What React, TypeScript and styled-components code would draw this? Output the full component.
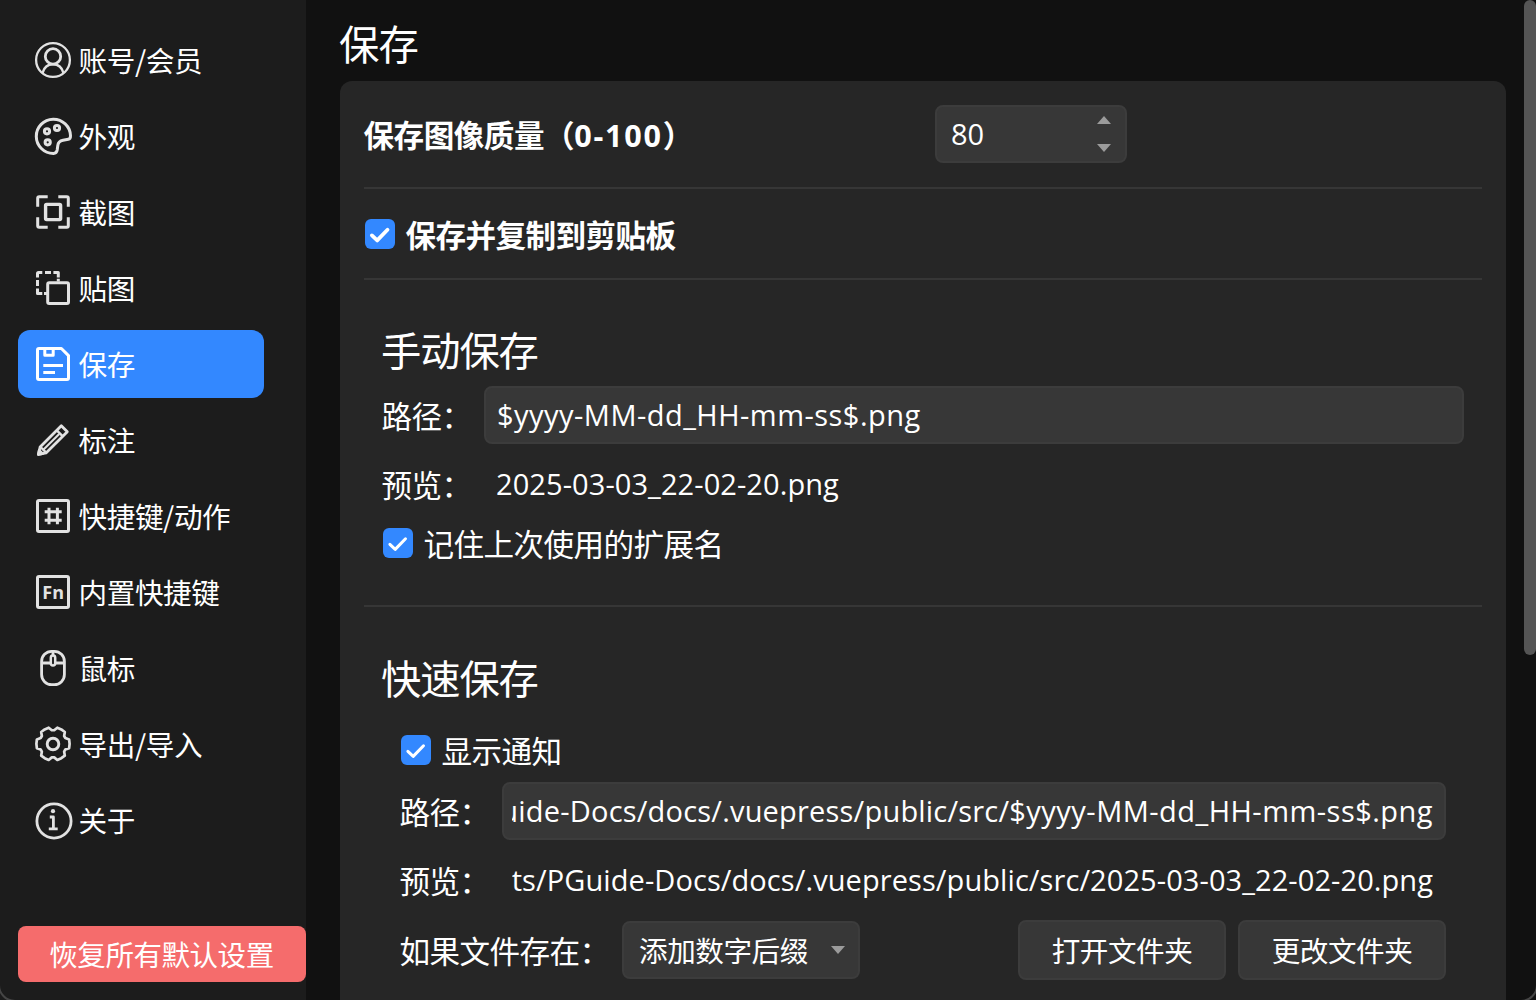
import React from 'react';
import styled, { createGlobalStyle, css } from 'styled-components';

const GlobalStyle = createGlobalStyle`
  *, *::before, *::after { box-sizing: border-box; }
  body {
    margin: 0;
    background: #1a1a1a;
    overflow: hidden;
  }
`;

const Window = styled.div`
  position: relative;
  display: flex;
  width: 1536px;
  height: 1000px;
  overflow: hidden;
  background: #111111;
  color: #ffffff;
  font-family: 'Open Sans', 'Noto Sans CJK SC', sans-serif;
  font-size: 30px;

  /* window outline, visible only where the bottom corners curve */
  &::after {
    content: '';
    position: absolute;
    inset: -20px -2px -2px;
    border: 2px solid #454545;
    border-radius: 0 0 17px 17px;
    pointer-events: none;
  }
`;

const Sidebar = styled.aside`
  display: flex;
  flex-direction: column;
  justify-content: space-between;
  width: 306px;
  flex: none;
  padding: 26px 0 18px 18px;
  background: #1c1c1c;
`;

const Nav = styled.nav`
  display: flex;
  flex-direction: column;
  gap: 8px;
`;

const NavItem = styled.a<{ $active?: boolean }>`
  display: flex;
  align-items: center;
  gap: 6.5px;
  width: 246px;
  height: 68px;
  padding-left: 17px;
  border-radius: 12px;
  background: ${(p) => (p.$active ? '#3388ff' : 'transparent')};
  color: ${(p) => (p.$active ? '#ffffff' : '#e2e2e2')};
`;

const NavLabel = styled.span`
  color: #ffffff;
  font-family: 'Noto Sans CJK SC', sans-serif;
  font-weight: 400;
  font-size: 28.6px;
  letter-spacing: -0.4px;
  line-height: 36px;
  white-space: nowrap;
`;

const NavIcon = styled.svg`
  width: 37px;
  height: 37px;
  flex: none;
  overflow: visible;
  fill: none;
  stroke: currentColor;
  stroke-width: 3;
  stroke-linejoin: round;
`;

const ResetButton = styled.button`
  height: 56px;
  border: 0;
  padding: 0 1px 0 0;
  border-radius: 8px;
  background: #f56c6c;
  color: #ffffff;
  font: 400 28.5px/36px 'Noto Sans CJK SC', sans-serif;
  letter-spacing: -0.45px;
`;

const Main = styled.main`
  display: flex;
  flex-direction: column;
  width: 1218px;
  padding: 0 18px 0 34px;
`;

const PageTitle = styled.h1`
  margin: 0 0 0 -1px;
  height: 81px;
  padding-top: 13px;
  font: 400 40.4px/60px 'Noto Sans CJK SC', sans-serif;
  letter-spacing: -1px;
`;

const Card = styled.section`
  display: flex;
  flex-direction: column;
  flex: 1;
  padding: 24px 24px 0;
  border-radius: 12px 12px 0 0;
  background: #262626;
`;

const Divider = styled.hr`
  width: 1118px;
  height: 2px;
  margin: 0;
  border: 0;
  flex: none;
  background: #363636;
`;

const QualityRow = styled.div`
  display: grid;
  grid-template-columns: 571px 192px;
  height: 82px;
  align-items: start;
`;

const StrongLabel = styled.span`
  margin-left: -0.5px;
  font-family: 'Noto Sans CJK SC', sans-serif;
  font-weight: 700;
  font-size: 30.6px;
  letter-spacing: -0.5px;
  line-height: 59px;
  white-space: nowrap;
`;

const QualityRange = styled.span`
  font-family: 'Open Sans', sans-serif;
  font-size: 30.5px;
  letter-spacing: 1.8px;
`;

const fieldSurface = css`
  border: 2px solid #3c3c3c;
  border-radius: 8px;
  background: #373737;
  color: #ffffff;
`;

const Spinner = styled.div`
  ${fieldSurface}
  display: flex;
  justify-content: space-between;
  align-items: center;
  height: 58px;
  padding: 0 14px;
  line-height: 54px;
  font-size: 29px;
`;

const Arrows = styled.span`
  display: flex;
  flex-direction: column;
  gap: 20px;
`;

const Arrow = styled.i<{ $up?: boolean }>`
  display: block;
  width: 14px;
  height: 8px;
  background: #9b9b9b;
  clip-path: ${(p) => (p.$up ? 'polygon(0 100%, 50% 0, 100% 100%)' : 'polygon(0 0, 100% 0, 50% 100%)')};
`;

const CheckRow = styled.label<{ $top: number; $height: number; $strong?: boolean }>`
  display: flex;
  align-items: flex-start;
  gap: 10.5px;
  height: ${(p) => p.$height}px;
  padding: ${(p) => p.$top}px 0 0 1px;
  font-family: 'Noto Sans CJK SC', sans-serif;
  font-weight: ${(p) => (p.$strong ? 700 : 400)};
  font-size: 30.6px;
  letter-spacing: -0.6px;
  line-height: 31px;
  white-space: nowrap;
`;

const CheckSquare = styled.span`
  display: grid;
  place-items: center;
  width: 30px;
  height: 30px;
  flex: none;
  border-radius: 6px;
  background: #3388ff;
`;

const Group = styled.div<{ $height?: number; $top: number }>`
  display: flex;
  flex-direction: column;
  padding: ${(p) => p.$top}px 18px 0;
  ${(p) => p.$height && `height: ${p.$height}px;`}
`;

const GroupTitle = styled.h2`
  margin: 0 0 0 -1px;
  height: 66px;
  font: 400 40.3px/57px 'Noto Sans CJK SC', sans-serif;
  letter-spacing: -1.1px;
`;

const Indented = styled.div`
  display: flex;
  flex-direction: column;
  padding: 0 18px;
`;

const FieldRow = styled.div`
  display: grid;
  grid-template-columns: 102px minmax(0, 1fr);
  grid-template-rows: 58px;
  height: 58px;
  margin-bottom: 12px;
`;

const FieldLabel = styled.span`
  margin-left: -0.5px;
  font: 400 30.6px/58px 'Noto Sans CJK SC', sans-serif;
  letter-spacing: -0.6px;
  white-space: nowrap;
`;

const PreviewLabel = styled(FieldLabel)`
  line-height: 56px;
`;

const TextField = styled.div<{ $spacing: number; $end?: boolean }>`
  ${fieldSurface}
  display: flex;
  padding: 0 ${(p) => (p.$end ? 11 : 12)}px 0 ${(p) => (p.$end ? 8 : 11)}px;
  line-height: 54px;
  font-size: 29px;
  letter-spacing: ${(p) => p.$spacing}px;
`;

const Pattern = styled.span`
  letter-spacing: 0.47px;
`;

const Preview = styled.div<{ $end?: boolean }>`
  display: flex;
  padding: 0 ${(p) => (p.$end ? 13 : 12)}px 0 ${(p) => (p.$end ? 10 : 12)}px;
  line-height: 56px;
  font-size: 29px;
  letter-spacing: 0.08px;
`;

const Clip = styled.span<{ $end?: boolean }>`
  display: flex;
  flex: 1;
  min-width: 0;
  overflow: hidden;
  white-space: nowrap;
  justify-content: ${(p) => (p.$end ? 'flex-end' : 'flex-start')};
`;

const ActionRow = styled.div`
  display: flex;
  align-items: center;
  height: 60px;
  margin-top: -2px;
`;

const ExistsLabel = styled(FieldLabel)`
  width: 222.5px;
`;

const Select = styled.div`
  ${fieldSurface}
  display: flex;
  align-items: center;
  justify-content: space-between;
  width: 238px;
  height: 58px;
  padding: 0 13px 0 15px;
  margin-right: auto;
  font: 400 28.6px/54px 'Noto Sans CJK SC', sans-serif;
  letter-spacing: -0.45px;
`;

const Button = styled.button`
  ${fieldSurface}
  width: 208px;
  height: 60px;
  margin-left: 12px;
  padding: 0;
  font: 400 28.6px/54px 'Noto Sans CJK SC', sans-serif;
  letter-spacing: -0.45px;
`;

const ScrollTrack = styled.div`
  width: 12px;
  flex: none;
`;

const ScrollThumb = styled.div`
  height: 655px;
  border-radius: 6px;
  background: #555555;
`;

const gearPath = (() => {
  const pts: string[] = [];
  for (let i = 0; i < 6; i++) {
    [[-25, 13.6], [-15, 16.7], [0, 16.6], [15, 16.7], [25, 13.6]].forEach(([a, r]) => {
      const t = ((i * 60 + a) * Math.PI) / 180;
      pts.push(`${(18 + r * Math.cos(t)).toFixed(2)} ${(17.8 + r * Math.sin(t)).toFixed(2)}`);
    });
  }
  return `M${pts.join('L')}Z`;
})();

const icons = {
  user: (
    <g strokeWidth="2.3">
      <circle cx="18" cy="18" r="16.9" />
      <circle cx="18" cy="14.4" r="7.7" strokeWidth="2.8" />
      <path d="M7.5 31C9 25.4 13 22.2 18 22.2S27 25.4 28.5 31" strokeWidth="2.6" />
    </g>
  ),
  palette: (
    <g>
      <path d="M18.4 35.4A17.1 17.1 0 1 1 35.5 17.8Q35.6 20.9 33.3 21.3L28 22.3Q23.3 23.2 22.8 27.5L22.2 32Q21.6 35.5 18.4 35.4Z" />
      <circle cx="12" cy="13.3" r="2.6" />
      <circle cx="22" cy="10" r="2.6" />
      <circle cx="12.7" cy="24.3" r="2.6" />
    </g>
  ),
  capture: (
    <g>
      <path d="M12.7 2.7H4.2Q2.7 2.7 2.7 4.2V12.7M23.3 2.7H31.8Q33.3 2.7 33.3 4.2V12.7M33.3 23.3V31.8Q33.3 33.3 31.8 33.3H23.3M12.7 33.3H4.2Q2.7 33.3 2.7 31.8V23.3" />
      <rect x="10.6" y="10.4" width="15" height="15.2" rx="1" strokeWidth="3.4" />
    </g>
  ),
  pin: (
    <g>
      <rect x="12.7" y="12.8" width="20.8" height="20.8" rx="1.5" />
      <path d="M2.5 7.5V3.5Q2.5 2.5 3.5 2.5H7.3M10 2.5H16M18.4 2.5H23.3V7.4M23.3 8.8V11.5M2.5 10V16M2.5 18.5V23.5H7.3M9 23.5H12" />
    </g>
  ),
  save: (
    <g>
      <path d="M4 2.5H26.4L33.5 9.6V32Q33.5 33.5 32 33.5H4Q2.5 33.5 2.5 32V4Q2.5 2.5 4 2.5Z" />
      <path d="M9.8 2.5V9.3H18.2V2.5M8.3 19.4H28M8.3 26.4H20" />
    </g>
  ),
  pencil: (
    <g strokeWidth="2.8">
      <path d="M26.3 3.8L32.3 9.8L11 30.9L3.4 32.5L5.1 25Z" />
      <path d="M21.8 8.4L27.8 14.4M5.5 25L11.2 30.6" strokeWidth="2.4" />
      <path d="M24.2 12L8.6 27.4" strokeWidth="2.1" />
      <path d="M3.4 32.5L4.2 28.5L7.5 31.7Z" fill="currentColor" />
    </g>
  ),
  hash: (
    <g>
      <rect x="2.5" y="2.5" width="31" height="31" rx="1.5" />
      <path d="M14 9.7V26.3M22.4 9.7V26.3M9.7 13.8H26.7M9.7 22.2H26.7" />
    </g>
  ),
  fn: (
    <g>
      <rect x="2.5" y="2.5" width="31" height="31" rx="1.5" />
      <text x="18.2" y="24.6" textAnchor="middle" fontFamily="Open Sans, sans-serif" fontWeight="700" fontSize="18" fill="currentColor" stroke="none">Fn</text>
    </g>
  ),
  mouse: (
    <g strokeWidth="2.8">
      <rect x="6.6" y="1.4" width="22.8" height="33.2" rx="10" />
      <path d="M6.6 13H15.5M20.5 13H29.4M18 1.4V5.5" />
      <rect x="15.8" y="5.5" width="4.4" height="10" rx="2.2" strokeWidth="2.5" />
    </g>
  ),
  gear: (
    <g strokeWidth="2.7">
      <path d={gearPath} />
      <circle cx="18" cy="18" r="5.8" strokeWidth="2.9" />
    </g>
  ),
  info: (
    <g strokeWidth="2.8">
      <circle cx="19" cy="19" r="17.1" />
      <circle cx="18" cy="9.2" r="2.1" fill="currentColor" stroke="none" />
      <path d="M14.8 15H18.4V26.6M13.8 26.8H22.7" />
    </g>
  ),
};

const navEntries: { icon: keyof typeof icons; label: string }[] = [
  { icon: 'user', label: '账号/会员' },
  { icon: 'palette', label: '外观' },
  { icon: 'capture', label: '截图' },
  { icon: 'pin', label: '贴图' },
  { icon: 'save', label: '保存' },
  { icon: 'pencil', label: '标注' },
  { icon: 'hash', label: '快捷键/动作' },
  { icon: 'fn', label: '内置快捷键' },
  { icon: 'mouse', label: '鼠标' },
  { icon: 'gear', label: '导出/导入' },
  { icon: 'info', label: '关于' },
];

const Check = ({ bold }: { bold?: boolean }) => (
  <CheckSquare>
    <svg width="30" height="30" viewBox="0 0 30 30" fill="none" stroke="#fff" strokeWidth={bold ? 3.8 : 3} strokeLinecap="round" strokeLinejoin="round">
      <path d="M6.9 16.4L12.2 21.4L22.5 10.8" />
    </svg>
  </CheckSquare>
);

export default function App() {
  return (
    <>
      <GlobalStyle />
      <Window>
        <Sidebar>
          <Nav>
            {navEntries.map(({ icon, label }) => (
              <NavItem key={icon} $active={icon === 'save'}>
                <NavIcon viewBox="0 0 37 37">{icons[icon]}</NavIcon>
                <NavLabel>{label}</NavLabel>
              </NavItem>
            ))}
          </Nav>
          <ResetButton>恢复所有默认设置</ResetButton>
        </Sidebar>
        <Main>
          <PageTitle>保存</PageTitle>
          <Card>
            <QualityRow>
              <StrongLabel>
                保存图像质量（<QualityRange>0-100</QualityRange>）
              </StrongLabel>
              <Spinner>
                80
                <Arrows>
                  <Arrow $up />
                  <Arrow />
                </Arrows>
              </Spinner>
            </QualityRow>
            <Divider />
            <CheckRow $top={30} $height={89} $strong>
              <Check bold />
              保存并复制到剪贴板
            </CheckRow>
            <Divider />
            <Group $top={40} $height={325}>
              <GroupTitle>手动保存</GroupTitle>
              <FieldRow>
                <FieldLabel>路径：</FieldLabel>
                <TextField $spacing={0.47}>
                  <Clip>$yyyy-MM-dd_HH-mm-ss$.png</Clip>
                </TextField>
              </FieldRow>
              <FieldRow>
                <PreviewLabel>预览：</PreviewLabel>
                <Preview>
                  <Clip>2025-03-03_22-02-20.png</Clip>
                </Preview>
              </FieldRow>
              <CheckRow $top={2} $height={34}>
                <Check />
                记住上次使用的扩展名
              </CheckRow>
            </Group>
            <Divider />
            <Group $top={41}>
              <GroupTitle>快速保存</GroupTitle>
              <Indented>
                <CheckRow $top={21} $height={68}>
                  <Check />
                  显示通知
                </CheckRow>
                <FieldRow>
                  <FieldLabel>路径：</FieldLabel>
                  <TextField $spacing={0.2} $end>
                    <Clip $end>
                      uide-Docs/docs/.vuepress/public/src/
                      <Pattern>$yyyy-MM-dd_HH-mm-ss$.png</Pattern>
                    </Clip>
                  </TextField>
                </FieldRow>
                <FieldRow>
                  <PreviewLabel>预览：</PreviewLabel>
                  <Preview $end>
                    <Clip $end>ts/PGuide-Docs/docs/.vuepress/public/src/2025-03-03_22-02-20.png</Clip>
                  </Preview>
                </FieldRow>
                <ActionRow>
                  <ExistsLabel>如果文件存在：</ExistsLabel>
                  <Select>
                    添加数字后缀
                    <Arrow />
                  </Select>
                  <Button>打开文件夹</Button>
                  <Button>更改文件夹</Button>
                </ActionRow>
              </Indented>
            </Group>
          </Card>
        </Main>
        <ScrollTrack>
          <ScrollThumb />
        </ScrollTrack>
      </Window>
    </>
  );
}
